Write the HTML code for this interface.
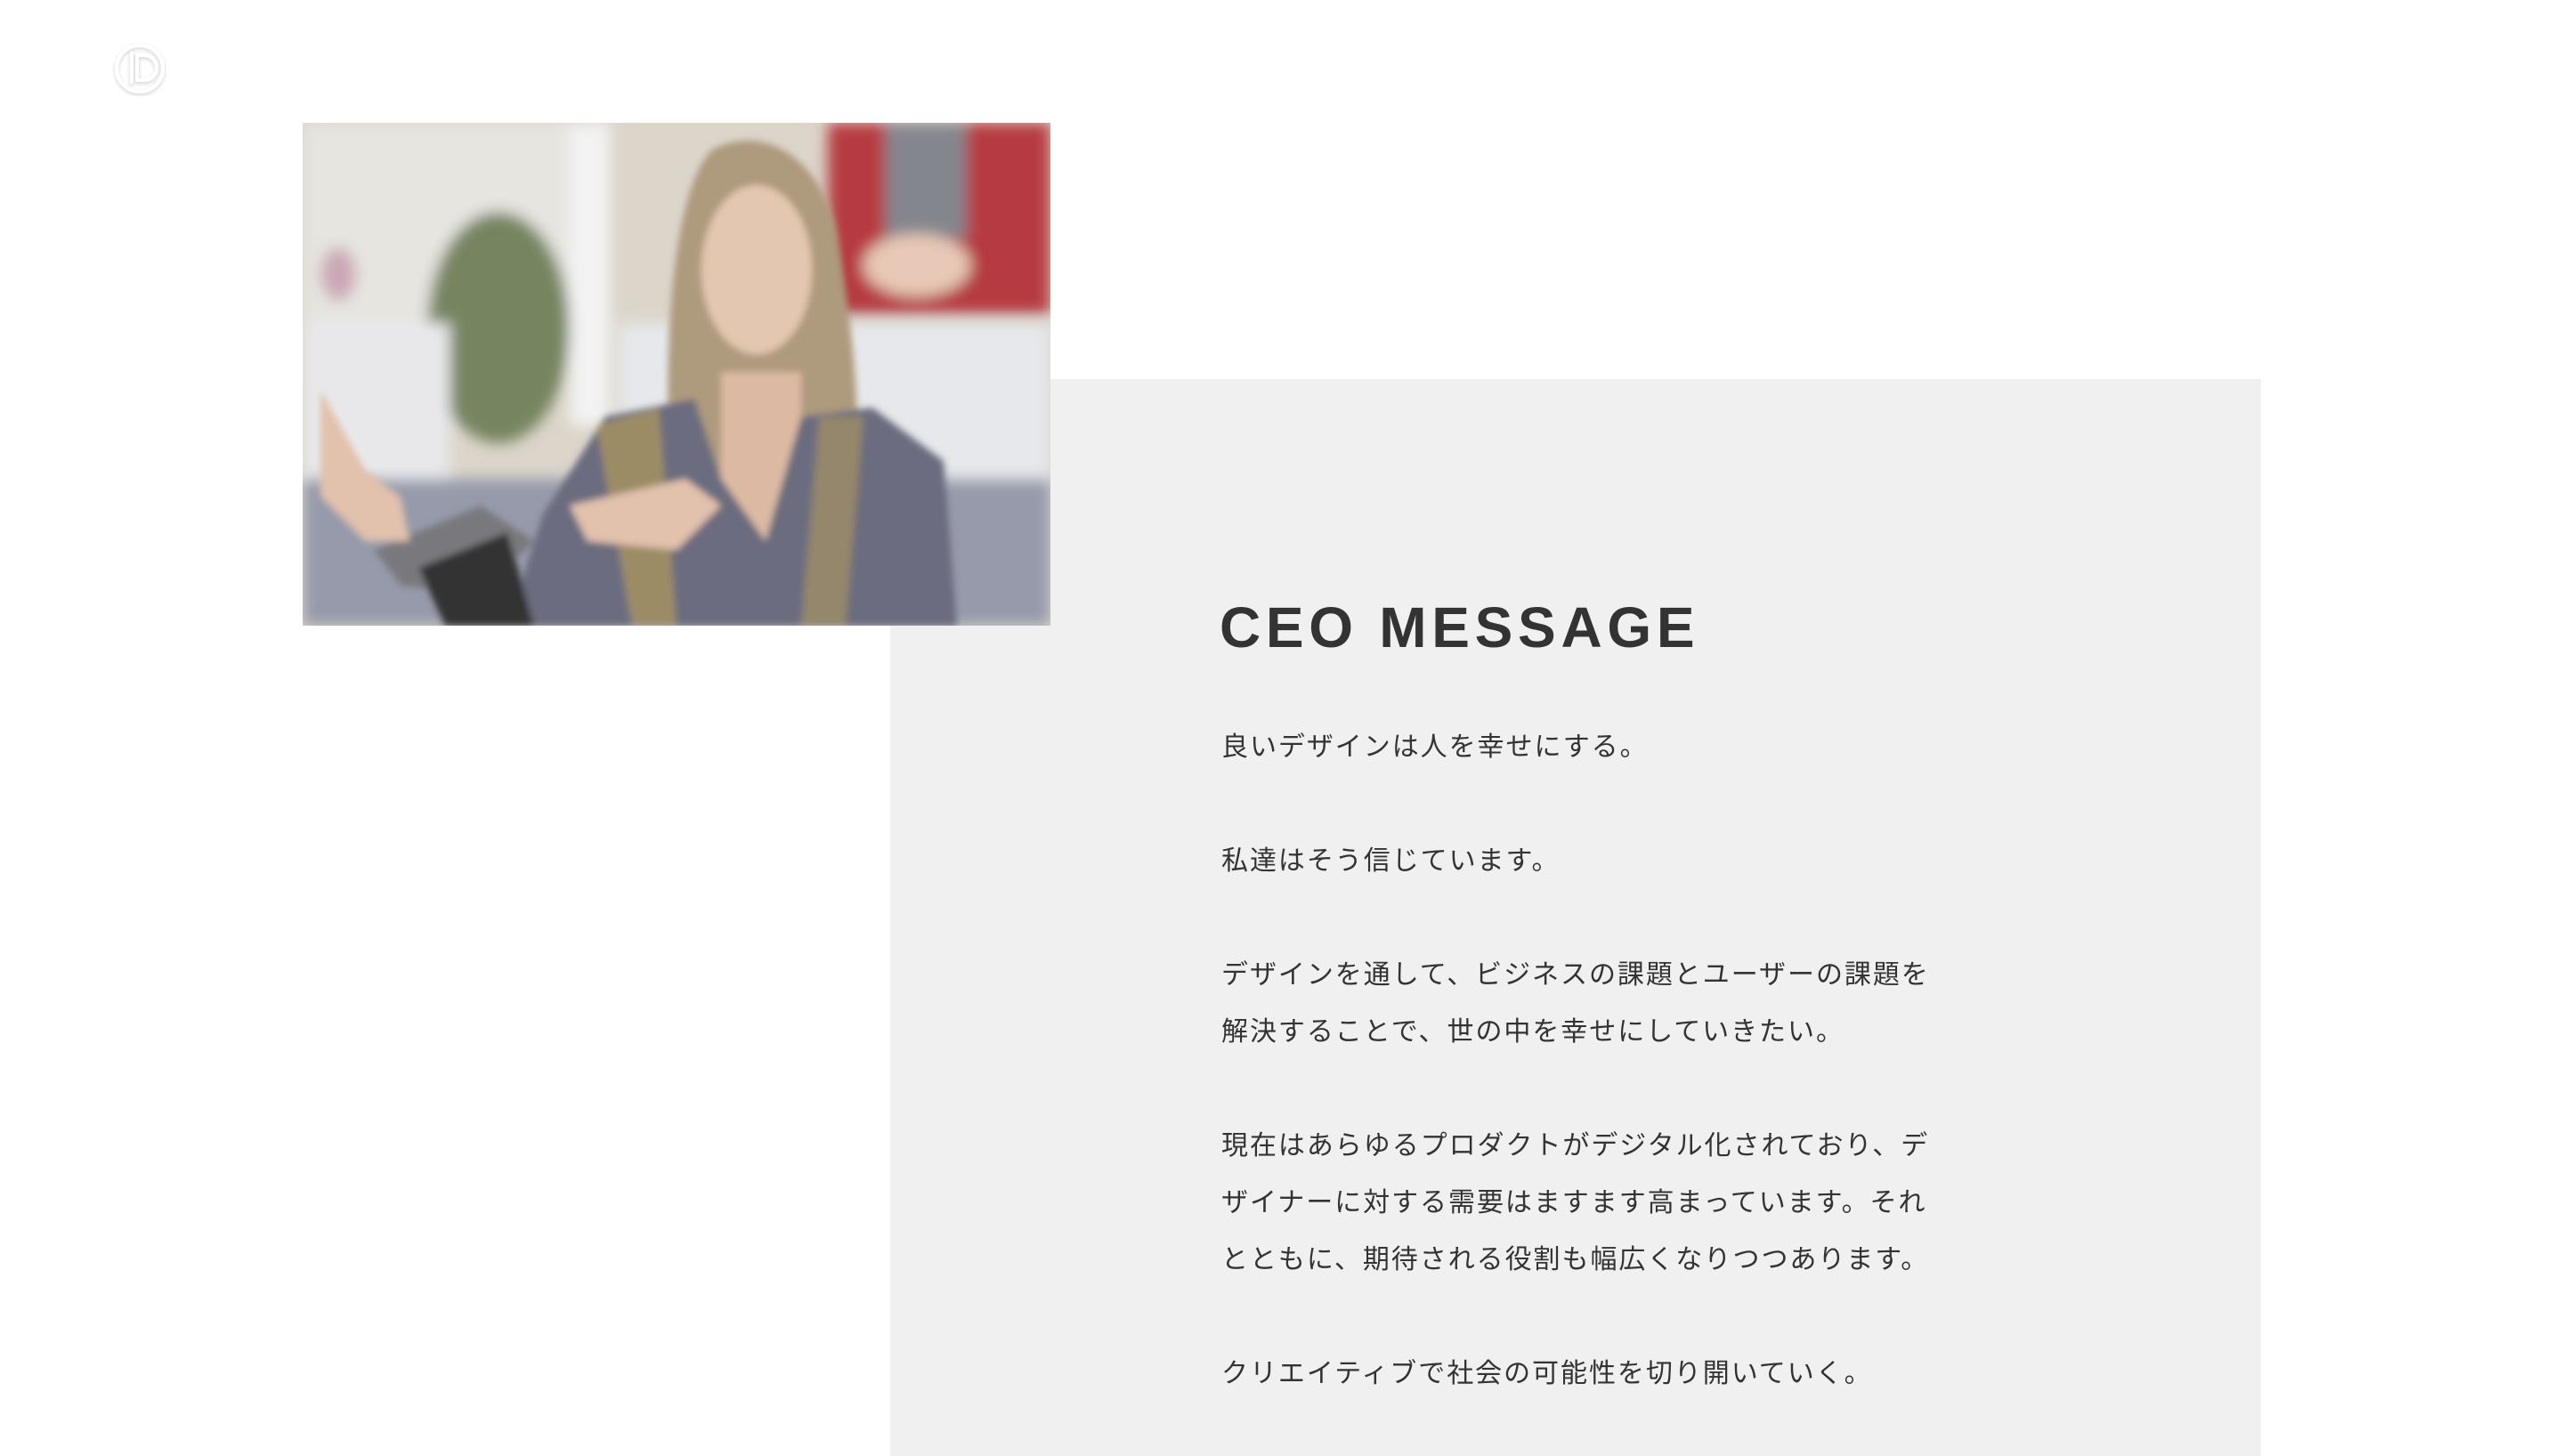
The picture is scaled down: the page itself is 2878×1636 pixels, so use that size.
<!DOCTYPE html>
<html><head><meta charset="utf-8"><style>
html,body{margin:0;padding:0;background:#fff;}
body{width:2878px;height:1636px;position:relative;overflow:hidden;}
.gray{position:absolute;left:1000px;top:426px;width:1540px;height:1210px;background:#f0f0f0;}
.photo{position:absolute;left:340px;top:138px;width:840px;height:565px;}
h1{position:absolute;left:1370px;top:662px;margin:0;font:700 64px/86px "Liberation Sans",sans-serif;letter-spacing:5.7px;color:#333;white-space:nowrap;}
.txt{position:absolute;left:1372px;top:808px;font-family:"Liberation Sans","Noto Sans CJK JP",sans-serif;font-size:30px;line-height:64px;letter-spacing:1.95px;color:#333;white-space:nowrap;}
.logo{position:absolute;left:126px;top:46px;width:62px;height:62px;}
</style></head><body>
<svg class="logo" viewBox="0 0 62 62">
<defs><filter id="sh"><feDropShadow dx="0" dy="2" stdDeviation="2" flood-color="#000" flood-opacity="0.18"/></filter></defs>
<g filter="url(#sh)" fill="none" stroke="#fff" stroke-width="4">
<circle cx="31" cy="31" r="26"/>
<path d="M22 12 V48 M28 16 H36 A14 14 0 0 1 36 44 H28 Z"/>
</g></svg>
<div class="gray"></div>
<svg class="photo" viewBox="0 0 840 565" preserveAspectRatio="none">
<defs><filter id="b"><feGaussianBlur stdDeviation="8"/></filter><filter id="b2"><feGaussianBlur stdDeviation="4"/></filter></defs>
<rect width="840" height="565" fill="#d9d2c6"/>
<g filter="url(#b)">
<rect x="0" y="0" width="300" height="230" fill="#e4e3de"/>
<rect x="300" y="0" width="45" height="340" fill="#f2f2f2"/>
<ellipse cx="220" cy="230" rx="80" ry="130" fill="#6c7a52"/>
<ellipse cx="40" cy="170" rx="20" ry="30" fill="#c8a0b0"/>
<rect x="590" y="0" width="250" height="215" fill="#b02a30"/>
<rect x="655" y="0" width="90" height="130" fill="#7a7c84"/>
<ellipse cx="690" cy="160" rx="60" ry="35" fill="#e6c4b0"/>
<rect x="0" y="225" width="165" height="180" fill="#e6e7ea"/>
<rect x="355" y="225" width="485" height="230" fill="#e4e6ea"/>
<rect x="0" y="400" width="840" height="165" fill="#8e92a4"/>
</g>
<g filter="url(#b2)">
<path d="M420 470 C400 300 410 80 460 30 C520 0 580 40 600 120 C620 250 640 400 600 500 Z" fill="#a89272"/>
<ellipse cx="510" cy="165" rx="62" ry="95" fill="#e2c3aa"/>
<path d="M470 280 L560 280 L560 470 L470 470 Z" fill="#d9b49c"/>
<path d="M230 565 L270 440 L340 330 L440 310 L470 400 L520 470 L560 330 L640 320 L720 380 L735 565 Z" fill="#5f6174"/>
<path d="M330 340 L400 320 L420 565 L370 565 Z" fill="#b79a4a" opacity="0.6"/>
<path d="M580 330 L630 330 L610 565 L560 565 Z" fill="#b79a4a" opacity="0.5"/>
<path d="M80 480 L200 430 L260 470 L200 530 L110 520 Z" fill="#6e6e72"/>
<path d="M20 300 L70 390 L110 420 L120 470 L70 470 L20 420 Z" fill="#e0bca6"/>
<path d="M300 430 L430 400 L470 430 L420 480 L320 470 Z" fill="#e0bca6"/>
<path d="M130 500 L230 460 L260 565 L160 565 Z" fill="#222"/>
</g>
<rect width="840" height="565" fill="#fff" opacity="0.08"/>
</svg>
<h1>CEO MESSAGE</h1>
<div class="txt">良いデザインは人を幸せにする。<br><br>私達はそう信じています。<br><br>デザインを通して、ビジネスの課題とユーザーの課題を<br>解決することで、世の中を幸せにしていきたい。<br><br>現在はあらゆるプロダクトがデジタル化されており、デ<br>ザイナーに対する需要はますます高まっています。それ<br>とともに、期待される役割も幅広くなりつつあります。<br><br>クリエイティブで社会の可能性を切り開いていく。</div>
</body></html>
